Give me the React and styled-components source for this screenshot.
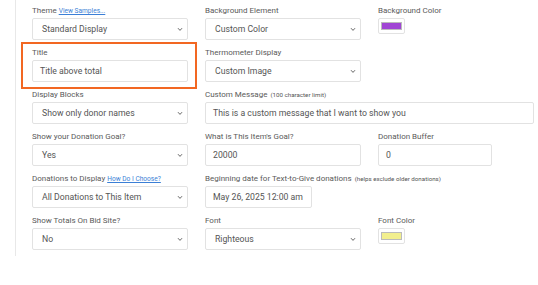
import React from 'react';
import styled, { createGlobalStyle } from 'styled-components';

const GlobalStyle = createGlobalStyle`
  body {
    margin: 0;
    background: #fff;
    font-family: Roboto, 'Liberation Sans', sans-serif;
  }
`;

const Panel = styled.div`
  margin-left: 15px;
  height: 256px;
  border-left: 1px solid #e8e8e8;
  padding: 3px 0 0 16px;
  box-sizing: border-box;
`;

const Grid = styled.div`
  display: grid;
  grid-template-columns: 156px 156px 156px;
  column-gap: 17px;
  row-gap: 5.1px;
`;

const Field = styled.div`
  position: relative;
  grid-column: ${(p) => p.span || 'auto'};
  display: flex;
  flex-direction: column;
  align-items: flex-start;

  ${(p) =>
    p.highlight &&
    `
    &::before {
      content: '';
      position: absolute;
      top: -3px;
      left: -11px;
      right: -9px;
      bottom: -7px;
      border: 2px solid #f26722;
      pointer-events: none;
    }
  `}
`;

const Label = styled.label`
  font-size: 8px;
  line-height: 15px;
  height: 14px;
  margin-bottom: 1px;
  color: #5a5a5a;
  white-space: nowrap;
`;

const Link = styled.a`
  font-size: 6.6px;
  color: #3b7fd6;
  text-decoration: underline;
  margin-left: 2px;
`;

const Note = styled.span`
  font-size: 6.2px;
  color: #555;
  margin-left: 1px;
`;

const Control = styled.div`
  position: relative;
  box-sizing: border-box;
  width: ${(p) => p.width || '100%'};
  height: 22px;
  border: 1px solid #e2e2e2;
  border-radius: 2px;
  background: #fff;
  display: flex;
  align-items: center;
  padding-left: ${(p) => (p.select ? '9px' : '7px')};
  font-size: 8.7px;
  color: #555;
  white-space: nowrap;
`;

const Chevron = styled.svg`
  position: absolute;
  right: 4px;
  top: 8px;
  width: 6px;
  height: 5px;
`;

const Swatch = styled.div`
  box-sizing: border-box;
  width: 27px;
  height: 16px;
  border: 1px solid #e2e2e2;
  border-radius: 2px;
  padding: 3px 2px;
  background: #fff;
`;

const SwatchFill = styled.div`
  width: 100%;
  height: 100%;
  box-sizing: border-box;
  background: ${(p) => p.color};
  border: 1px solid #bbb;
`;

const Select = ({ children }) => (
  <Control select>
    {children}
    <Chevron viewBox="0 0 6 5">
      <path d="M1 1.2 L3 3.4 L5 1.2" fill="none" stroke="#666" strokeWidth="1" />
    </Chevron>
  </Control>
);

export default function App() {
  return (
    <>
      <GlobalStyle />
      <Panel>
        <Grid>
          <Field>
            <Label>
              Theme<Link href="#">View Samples...</Link>
            </Label>
            <Select>Standard Display</Select>
          </Field>
          <Field>
            <Label>Background Element</Label>
            <Select>Custom Color</Select>
          </Field>
          <Field>
            <Label>Background Color</Label>
            <Swatch>
              <SwatchFill color="#a045d4" />
            </Swatch>
          </Field>

          <Field highlight>
            <Label>Title</Label>
            <Control>Title above total</Control>
          </Field>
          <Field>
            <Label>Thermometer Display</Label>
            <Select>Custom Image</Select>
          </Field>
          <div />

          <Field>
            <Label>Display Blocks</Label>
            <Select>Show only donor names</Select>
          </Field>
          <Field span="2 / span 2">
            <Label>
              Custom Message <Note>(100 character limit)</Note>
            </Label>
            <Control>This is a custom message that I want to show you</Control>
          </Field>

          <Field>
            <Label>Show your Donation Goal?</Label>
            <Select>Yes</Select>
          </Field>
          <Field>
            <Label>What is This Item's Goal?</Label>
            <Control>20000</Control>
          </Field>
          <Field>
            <Label>Donation Buffer</Label>
            <Control width="114px">0</Control>
          </Field>

          <Field>
            <Label>
              Donations to Display<Link href="#">How Do I Choose?</Link>
            </Label>
            <Select>All Donations to This Item</Select>
          </Field>
          <Field span="2 / span 2">
            <Label>
              Beginning date for Text-to-Give donations{' '}
              <Note>(helps exclude older donations)</Note>
            </Label>
            <Control width="107px">May 26, 2025 12:00 am</Control>
          </Field>

          <Field>
            <Label>Show Totals On Bid Site?</Label>
            <Select>No</Select>
          </Field>
          <Field>
            <Label>Font</Label>
            <Select>Righteous</Select>
          </Field>
          <Field>
            <Label>Font Color</Label>
            <Swatch>
              <SwatchFill color="#f2ef8e" />
            </Swatch>
          </Field>
        </Grid>
      </Panel>
    </>
  );
}
